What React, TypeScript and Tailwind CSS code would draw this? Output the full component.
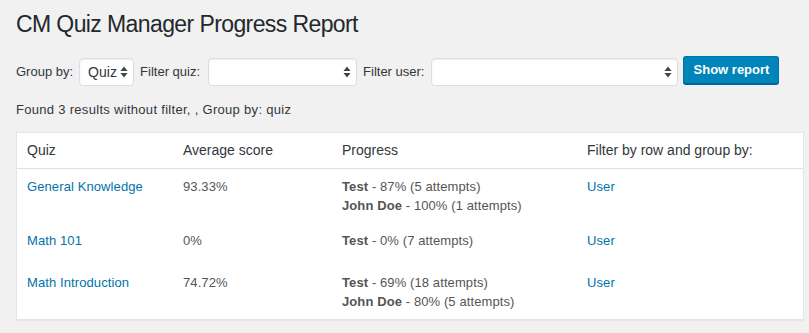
import React from "react";

function Arrows() {
  return (
    <svg width="8" height="13" viewBox="0 0 8 13" className="absolute right-[5px] top-1/2 -translate-y-1/2">
      <path d="M4 1 L7.5 5.5 L0.5 5.5 Z" fill="#444" />
      <path d="M4 12 L7.5 7.5 L0.5 7.5 Z" fill="#444" />
    </svg>
  );
}

function Select({ w, value }: { w: string; value?: string }) {
  return (
    <div
      className={`relative h-[28px] ${w} rounded-[4px] border border-[#dddddd] bg-white shadow-[inset_0_1px_2px_rgba(0,0,0,0.07)] flex items-center pl-[8px] text-[14px] text-[#32373c]`}
    >
      {value}
      <Arrows />
    </div>
  );
}

type Row = {
  quiz: string;
  avg: string;
  progress: { name: string; rest: string }[];
  pb: string;
};

const rows: Row[] = [
  {
    quiz: "General Knowledge",
    avg: "93.33%",
    progress: [
      { name: "Test", rest: " - 87% (5 attempts)" },
      { name: "John Doe", rest: " - 100% (1 attempts)" },
    ],
    pb: "pb-[8px]",
  },
  {
    quiz: "Math 101",
    avg: "0%",
    progress: [{ name: "Test", rest: " - 0% (7 attempts)" }],
    pb: "pb-[15px]",
  },
  {
    quiz: "Math Introduction",
    avg: "74.72%",
    progress: [
      { name: "Test", rest: " - 69% (18 attempts)" },
      { name: "John Doe", rest: " - 80% (5 attempts)" },
    ],
    pb: "pb-[8px]",
  },
];

export default function App() {
  return (
    <div
      className="min-h-[333px] w-[809px] bg-[#f1f1f1] pl-[16px] pr-[5px] text-[13px] text-[#32373c]"
      style={{ fontFamily: '"Liberation Sans", Arial, sans-serif' }}
    >
      <h1 className="pt-[9px] text-[23px] leading-[30px] tracking-[-0.6px] text-[#23282d] font-normal">
        CM Quiz Manager Progress Report
      </h1>

      <div className="mt-[17px] flex items-center text-[13px] text-[#32373c]">
        <span className="mr-[6px]">Group by:</span>
        <Select w="w-[55px]" value="Quiz" />
        <span className="ml-[6px] mr-[8px]">Filter quiz:</span>
        <Select w="w-[149px]" />
        <span className="ml-[6px] mr-[7px]">Filter user:</span>
        <Select w="w-[247px]" />
        <button className="ml-[5px] mb-[4px] h-[28px] w-[96px] rounded-[3px] border border-[#0073aa] border-b-[#006799] bg-[#0085ba] text-[13px] font-bold text-white shadow-[0_1px_0_#006799]">
          Show report
        </button>
      </div>

      <div className="mt-[12px] leading-[19px] tracking-[0.3px]">Found 3 results without filter, , Group by: quiz</div>

      <div className="mt-[13px] border border-[#e5e5e5] bg-white shadow-[0_1px_1px_rgba(0,0,0,0.04)]">
        <table className="w-full border-collapse table-fixed">
          <colgroup>
            <col className="w-[156px]" />
            <col className="w-[159px]" />
            <col className="w-[245px]" />
            <col />
          </colgroup>
          <thead>
            <tr className="border-b border-[#e1e1e1]">
              {["Quiz", "Average score", "Progress", "Filter by row and group by:"].map((h) => (
                <th
                  key={h}
                  className="px-[10px] pt-[8px] pb-[8px] text-left text-[14px] font-normal leading-[19px] text-[#32373c]"
                >
                  {h}
                </th>
              ))}
            </tr>
          </thead>
          <tbody>
            {rows.map((r) => (
              <tr key={r.quiz} className="align-top leading-[19px] text-[13px] tracking-[0.1px]">
                <td className={`px-[10px] pt-[8px] ${r.pb}`}>
                  <a className="text-[#0073aa]">{r.quiz}</a>
                </td>
                <td className={`px-[10px] pt-[8px] ${r.pb} text-[#555555]`}>{r.avg}</td>
                <td className={`px-[10px] pt-[8px] ${r.pb} text-[#555555]`}>
                  {r.progress.map((p) => (
                    <div key={p.name}>
                      <span className="font-bold">{p.name}</span>
                      {p.rest}
                    </div>
                  ))}
                </td>
                <td className={`px-[10px] pt-[8px] ${r.pb}`}>
                  <a className="text-[#0073aa]">User</a>
                </td>
              </tr>
            ))}
          </tbody>
        </table>
      </div>
    </div>
  );
}
